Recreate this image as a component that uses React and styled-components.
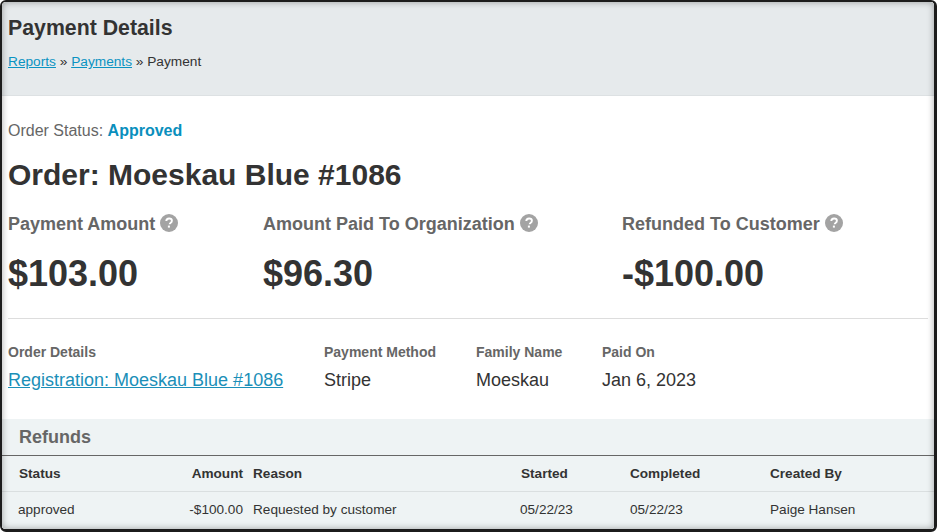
import React from 'react'
import styled, { createGlobalStyle } from 'styled-components'

const Global = createGlobalStyle`
  html, body { margin: 0; padding: 0; background: #fff; }
  body { font-family: "Liberation Sans", Arial, sans-serif; color: #333; }
  * { box-sizing: border-box; }
`

const stats = [
  { label: 'Payment Amount', value: '$103.00', width: 255 },
  { label: 'Amount Paid To Organization', value: '$96.30', width: 359 },
  { label: 'Refunded To Customer', value: '-$100.00', width: 300 },
]

const details = [
  { label: 'Order Details', value: 'Registration: Moeskau Blue #1086', width: 316, link: true },
  { label: 'Payment Method', value: 'Stripe', width: 152 },
  { label: 'Family Name', value: 'Moeskau', width: 126 },
  { label: 'Paid On', value: 'Jan 6, 2023', width: 200 },
]

function HelpIcon() {
  return (
    <Help viewBox="0 0 18 18">
      <circle cx="9" cy="9" r="9" fill="#a3a3a3" />
      <path d="M6.3 7.1c0-1.6 1.2-2.6 2.8-2.6 1.6 0 2.8.9 2.8 2.3 0 1.1-.6 1.7-1.4 2.2-.6.4-.8.6-.8 1.2" fill="none" stroke="#fff" strokeWidth="1.9" />
      <rect x="7.9" y="11.6" width="2" height="2" fill="#fff" />
    </Help>
  )
}

export default function App() {
  return (
    <Window>
      <Global />
      <Header>
        <Title>Payment Details</Title>
        <Crumbs>
          <a href="#reports">Reports</a> » <a href="#payments">Payments</a> » Payment
        </Crumbs>
      </Header>

      <Main>
        <StatusLine>Order Status: <b>Approved</b></StatusLine>
        <OrderTitle>Order: Moeskau Blue #1086</OrderTitle>
        <Stats>
          {stats.map(s => (
            <Stat key={s.label} $width={s.width}>
              <StatLabel>{s.label}<HelpIcon /></StatLabel>
              <StatValue>{s.value}</StatValue>
            </Stat>
          ))}
        </Stats>
        <Details>
          {details.map(d => (
            <Detail key={d.label} $width={d.width}>
              <DetailLabel>{d.label}</DetailLabel>
              <DetailValue>
                {d.link ? <a href="#order">{d.value}</a> : d.value}
              </DetailValue>
            </Detail>
          ))}
        </Details>
      </Main>

      <Refunds>
        <RefundsTitle>Refunds</RefundsTitle>
        <HeadRow>
          <span>Status</span>
          <Amount>Amount</Amount>
          <span>Reason</span>
          <span>Started</span>
          <span>Completed</span>
          <span>Created By</span>
        </HeadRow>
        <Row>
          <Status>approved</Status>
          <Amount>-$100.00</Amount>
          <span>Requested by customer</span>
          <Started>05/22/23</Started>
          <span>05/22/23</span>
          <span>Paige Hansen</span>
        </Row>
      </Refunds>
    </Window>
  )
}

const Window = styled.div`
  position: relative;
  width: 937px;
  height: 532px;
  overflow: hidden;
  background: #fff;
  border: 2px solid #1c1c1c;
  border-right-width: 3px;
  border-bottom-width: 3px;
  border-radius: 6px;
  &::after {
    content: '';
    position: absolute;
    inset: 0;
    pointer-events: none;
    box-shadow: inset 0 0 7px rgba(0, 0, 0, 0.35);
    border-radius: 4px;
  }
`
const Header = styled.header`
  height: 94px;
  padding: 13px 6px 0;
  background: #e6eaec;
  border-bottom: 1px solid #dde1e3;
`
const Title = styled.h1`
  margin: 0;
  font-size: 21.3px;
  line-height: 26px;
  font-weight: 700;
  color: #333;
`
const Crumbs = styled.div`
  margin-top: 11px;
  font-size: 13.7px;
  line-height: 20px;
  color: #333;
  a { color: #0a93c2; }
`
const Main = styled.main`
  height: 323px;
  padding: 25px 6px 0;
`
const StatusLine = styled.div`
  font-size: 16px;
  line-height: 20px;
  color: #666;
  b { color: #0a8fbd; }
`
const OrderTitle = styled.h2`
  margin: 16px 0 0;
  font-size: 30px;
  line-height: 36px;
  font-weight: 700;
  color: #333;
`
const Stats = styled.div`
  display: flex;
  margin-top: 19px;
  padding-bottom: 23px;
  border-bottom: 1px solid #ddd;
`
const Stat = styled.div`
  width: ${p => p.$width}px;
  flex: none;
`
const StatLabel = styled.div`
  display: flex;
  align-items: center;
  gap: 5px;
  height: 24px;
  font-size: 18px;
  font-weight: 700;
  color: #666;
`
const Help = styled.svg`
  width: 18px;
  height: 18px;
  margin-top: -3px;
`
const StatValue = styled.div`
  margin-top: 17px;
  font-size: 36px;
  line-height: 42px;
  font-weight: 700;
  color: #333;
`
const Details = styled.div`
  display: flex;
  margin-top: 24px;
`
const Detail = styled.div`
  width: ${p => p.$width}px;
  flex: none;
`
const DetailLabel = styled.div`
  font-size: 14px;
  line-height: 18px;
  font-weight: 700;
  color: #666;
`
const DetailValue = styled.div`
  margin-top: 7px;
  font-size: 18px;
  line-height: 24px;
  color: #333;
  a { color: #1b8fb8; }
`
const Refunds = styled.section`
  height: 110px;
  background: #eef3f4;
`
const RefundsTitle = styled.h3`
  margin: 0;
  height: 37px;
  padding: 7px 17px 0;
  font-size: 18px;
  line-height: 22px;
  font-weight: 700;
  color: #666;
  border-bottom: 1px solid #666;
`
const Columns = styled.div`
  display: grid;
  grid-template-columns: 172px 62px 268px 109px 140px 1fr;
  align-items: center;
  padding-left: 17px;
  font-size: 13.6px;
`
const HeadRow = styled(Columns)`
  height: 36px;
  padding-bottom: 1px;
  font-weight: 700;
  color: #333;
  border-bottom: 1px solid #dadfe0;
`
const Row = styled(Columns)`
  height: 35px;
  padding-bottom: 1px;
  color: #333;
`
const Amount = styled.span`
  width: 62px;
  margin-left: -10px;
  text-align: right;
`
const Status = styled.span`
  margin-left: -1px;
`
const Started = styled.span`
  margin-left: -1px;
`
